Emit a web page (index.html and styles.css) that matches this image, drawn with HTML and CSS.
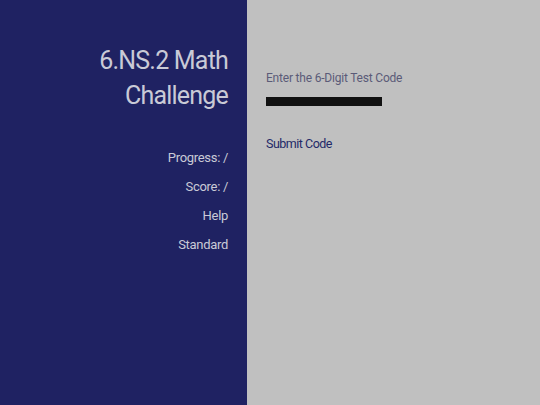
FILE: index.html
```html
<!DOCTYPE html>
<html>
<head>
<meta charset="utf-8">
<link rel="stylesheet" href="styles.css">
</head>
<body>
<div class="app">
  <aside class="side">
    <h1 class="title">6.NS.2 Math<br>Challenge</h1>
    <nav class="menu">
      <div class="item">Progress: /</div>
      <div class="item">Score: /</div>
      <div class="item">Help</div>
      <div class="item">Standard</div>
    </nav>
  </aside>
  <main class="main">
    <label class="label">Enter the 6-Digit Test Code</label>
    <div class="code"></div>
    <div class="submit">Submit Code</div>
  </main>
</div>
</body>
</html>
```
FILE: styles.css
```css
html, body { margin: 0; padding: 0; height: 100%; }
body { font-family: "Roboto", "Liberation Sans", sans-serif; }
.app { display: flex; width: 540px; height: 405px; }
.side {
  width: 247px;
  background: #1f2262;
  color: #c9cad6;
  box-sizing: border-box;
  padding: 43px 19px 0 0;
  text-align: right;
}
.title {
  margin: 0;
  font-weight: 400;
  font-size: 25px;
  line-height: 35px;
  letter-spacing: -0.8px;
}
.menu { margin-top: 35px; display: flex; flex-direction: column; gap: 10px; }
.item { font-size: 13px; line-height: 19px; letter-spacing: -0.3px; }
.main {
  flex: 1;
  background: #c0c0c0;
  padding: 70px 0 0 19px;
  display: flex;
  flex-direction: column;
  align-items: flex-start;
}
.label { font-size: 12px; line-height: 16px; color: #5b5b78; letter-spacing: -0.2px; }
.code { margin-top: 11px; width: 116px; height: 9px; background: #111; }
.submit { margin-top: 30px; font-size: 12.5px; line-height: 16px; color: #1f2a68; letter-spacing: -0.5px; }
```
